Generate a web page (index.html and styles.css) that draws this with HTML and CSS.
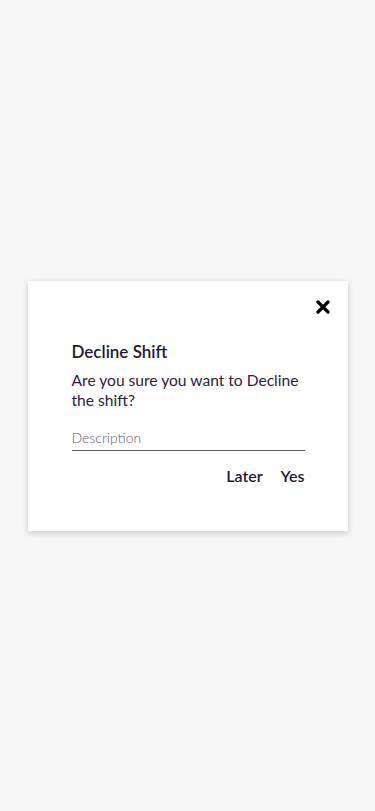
FILE: index.html
```html
<!DOCTYPE html>
<html lang="en">
<head>
<meta charset="utf-8">
<title>Decline Shift</title>
<link rel="stylesheet" href="styles.css">
</head>
<body>
<div class="overlay">
  <div class="dialog">
    <div class="dialog-top">
      <button class="close" aria-label="Close">
        <svg width="14" height="14" viewBox="0 0 14 14"><path d="M2 2 L12 12 M12 2 L2 12" stroke="#000" stroke-width="3.2" stroke-linecap="round"/></svg>
      </button>
    </div>
    <div class="dialog-body">
      <h2 class="title">Decline Shift</h2>
      <p class="message">Are you sure you want to Decline the shift?</p>
      <div class="field">
        <input class="input" type="text" placeholder="Description">
      </div>
      <div class="actions">
        <button class="action">Later</button>
        <button class="action">Yes</button>
      </div>
    </div>
  </div>
</div>
</body>
</html>
```
FILE: styles.css
```css
* { box-sizing: border-box; }
html, body { margin: 0; padding: 0; }
body {
  background: #f6f6f6;
  font-family: "Lato", "Noto Sans", sans-serif;
  color: #221a36;
  width: 375px;
  height: 811px;
}
.overlay {
  height: 811px;
  display: flex;
  align-items: center;
  justify-content: center;
}
.dialog {
  width: 320px;
  height: 250px;
  background: #fff;
  box-shadow: 0 2px 6px rgba(0,0,0,0.18);
  margin-top: 1px;
  padding: 14px 13px 0 44px;
}
.dialog-top {
  display: flex;
  justify-content: flex-end;
  height: 24px;
}
.close {
  border: 0;
  background: none;
  padding: 0;
  width: 24px;
  height: 24px;
  display: flex;
  align-items: center;
  justify-content: center;
  cursor: pointer;
}
.dialog-body {
  padding-right: 30px;
  padding-top: 22px;
}
.title {
  margin: 0;
  font-size: 17px;
  font-weight: 600;
  line-height: 22px;
  color: #221a36;
}
.message {
  margin: 7px 0 0;
  font-size: 15.6px;
  line-height: 20px;
  color: #2b2240;
}
.field {
  margin-top: 17px;
  border-bottom: 1px solid #5a5a5a;
}
.input {
  border: 0;
  outline: none;
  width: 100%;
  padding: 0 0 3px;
  font-family: inherit;
  font-size: 14px;
  font-weight: 300;
  line-height: 18px;
  background: transparent;
}
.input::placeholder { color: #625d6e; }
.actions {
  display: flex;
  justify-content: flex-end;
  gap: 18px;
  margin-top: 15px;
}
.action {
  border: 0;
  background: none;
  padding: 0;
  font-family: inherit;
  font-size: 16px;
  font-weight: 600;
  color: #221a36;
  line-height: 20px;
  cursor: pointer;
}
```
